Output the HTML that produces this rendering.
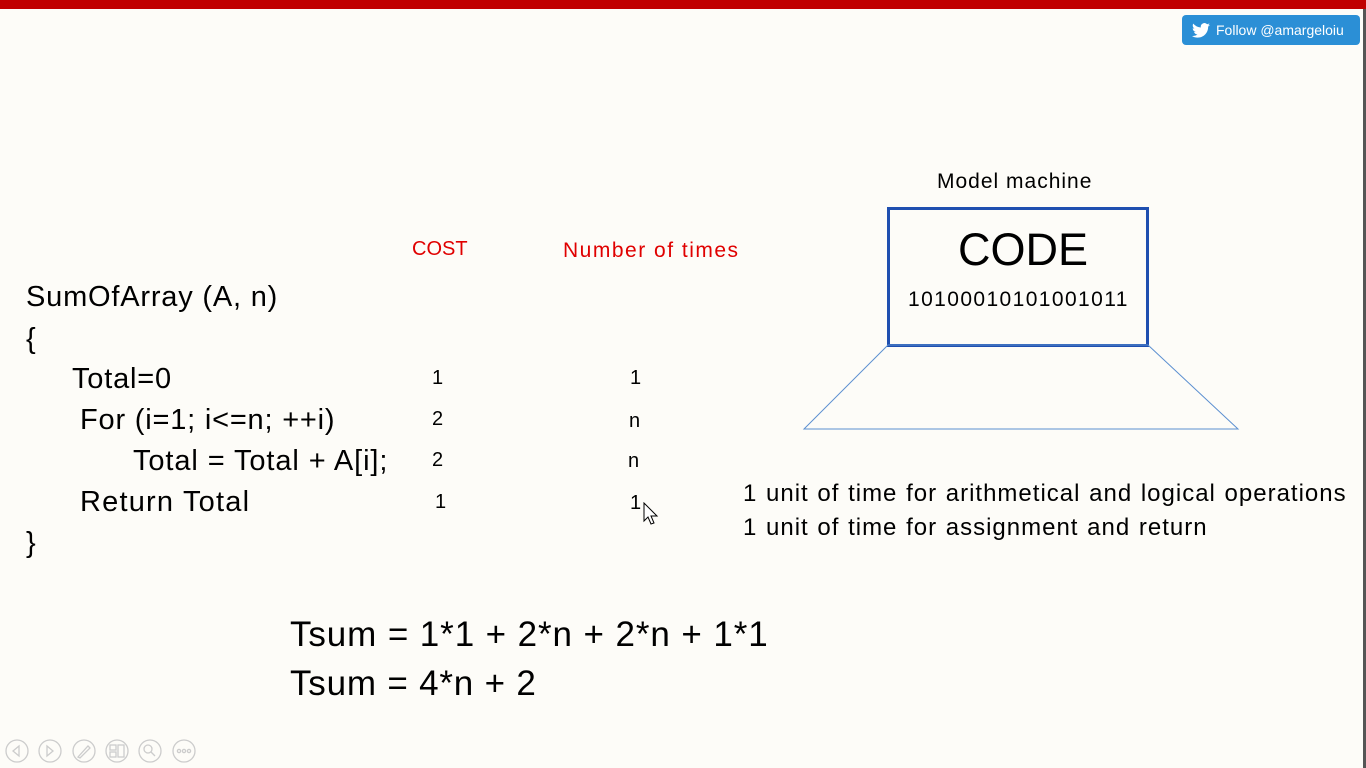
<!DOCTYPE html>
<html><head><meta charset="utf-8"><style>
body{margin:0;width:1366px;height:768px;background:#fdfcf8;position:relative;overflow:hidden;font-family:"Liberation Sans",sans-serif;color:#000}
.t{position:absolute;white-space:nowrap;line-height:1}
.red{color:#e00000}
.c{font-size:29px;letter-spacing:0.8px}
</style></head><body>
<div style="position:absolute;left:0;top:0;width:1366px;height:9px;background:#c00000"></div>
<div style="position:absolute;right:0;top:9px;width:3px;height:759px;background:#555"></div>
<div style="position:absolute;left:1182px;top:15px;width:178px;height:30px;background:#2b8fd6;border-radius:4px;color:#fff;font-size:14px;line-height:30px">
<svg style="position:absolute;left:10px;top:8px" width="18" height="15" viewBox="0 0 24 20"><path fill="#fff" d="M24 2.4a9.8 9.8 0 0 1-2.8.8A4.9 4.9 0 0 0 23.3.5a9.9 9.9 0 0 1-3.1 1.2A4.9 4.9 0 0 0 11.8 6 14 14 0 0 1 1.7.9a4.9 4.9 0 0 0 1.5 6.6A4.9 4.9 0 0 1 1 6.9v.1a4.9 4.9 0 0 0 3.9 4.8 4.9 4.9 0 0 1-2.2.1 4.9 4.9 0 0 0 4.6 3.4A9.9 9.9 0 0 1 0 17.3 14 14 0 0 0 7.5 19.5c9 0 14-7.5 14-14v-.6A10 10 0 0 0 24 2.4z"/></svg>
<span style="position:absolute;left:34px">Follow @amargeloiu</span></div>

<div class="t red" style="left:412px;top:239px;font-size:20px">COST</div>
<div class="t red" style="left:563px;top:240px;font-size:21px;letter-spacing:1.5px">Number of times</div>

<div class="t c" style="left:26px;top:283px">SumOfArray (A, n)</div>
<div class="t c" style="left:26px;top:325px">{</div>
<div class="t c" style="left:72px;top:365px">Total=0</div>
<div class="t c" style="left:80px;top:406px">For (i=1; i&lt;=n; ++i)</div>
<div class="t c" style="left:133px;top:447px;letter-spacing:0.9px">Total = Total + A[i];</div>
<div class="t c" style="left:80px;top:488px;letter-spacing:1.2px">Return Total</div>
<div class="t c" style="left:26px;top:529px">}</div>

<div class="t" style="left:432px;top:368px;font-size:20px">1</div>
<div class="t" style="left:432px;top:409px;font-size:20px">2</div>
<div class="t" style="left:432px;top:450px;font-size:20px">2</div>
<div class="t" style="left:435px;top:492px;font-size:20px">1</div>
<div class="t" style="left:630px;top:368px;font-size:20px">1</div>
<div class="t" style="left:629px;top:411px;font-size:20px">n</div>
<div class="t" style="left:628px;top:451px;font-size:20px">n</div>
<div class="t" style="left:630px;top:493px;font-size:20px">1</div>
<svg style="position:absolute;left:643px;top:502px" width="16" height="24" viewBox="0 0 16 24"><path d="M1 1v18l4-4 3 7 3-1-3-7h6z" fill="#fff" stroke="#000" stroke-width="1"/></svg>

<div class="t" style="left:937px;top:171px;font-size:21px;letter-spacing:1px">Model machine</div>
<div style="position:absolute;left:887px;top:207px;width:256px;height:134px;border:3px solid #1f4fb0"></div>
<div class="t" style="left:958px;top:227px;font-size:45px">CODE</div>
<div class="t" style="left:908px;top:289px;font-size:21px;letter-spacing:1.4px">10100010101001011</div>
<svg style="position:absolute;left:0;top:0" width="1366" height="768"><polygon points="888,345 1148,345 1238,429 804,429" fill="none" stroke="#5b8fd0" stroke-width="1"/></svg>

<div class="t" style="left:743px;top:482px;font-size:24px;letter-spacing:1px;word-spacing:1px">1 unit of time for arithmetical and logical operations</div>
<div class="t" style="left:743px;top:516px;font-size:24px;letter-spacing:1px;word-spacing:1px">1 unit of time for assignment and return</div>

<div class="t" style="left:290px;top:617px;font-size:35px;letter-spacing:0.9px">Tsum = 1*1 + 2*n + 2*n + 1*1</div>
<div class="t" style="left:290px;top:666px;font-size:35px;letter-spacing:0.8px">Tsum = 4*n + 2</div>

<svg style="position:absolute;left:0;top:735px" width="210" height="32" fill="none" stroke="#ccc" stroke-width="1.3">
<circle cx="17" cy="16" r="11"/><path d="M19 11l-6 5 6 5z"/>
<circle cx="50" cy="16" r="11"/><path d="M47 11l6 5-6 5z"/>
<circle cx="84" cy="16" r="11"/><path d="M78 22l10-11 2 2-10 10z"/>
<circle cx="117" cy="16" r="11"/><rect x="110" y="10" width="6" height="5"/><rect x="118" y="10" width="6" height="12"/><rect x="110" y="17" width="6" height="5"/>
<circle cx="150" cy="16" r="11"/><circle cx="148" cy="14" r="4"/><path d="M151 17l4 4"/>
<circle cx="184" cy="16" r="11"/><circle cx="179" cy="16" r="1.6"/><circle cx="184" cy="16" r="1.6"/><circle cx="189" cy="16" r="1.6"/>
</svg>
</body></html>
